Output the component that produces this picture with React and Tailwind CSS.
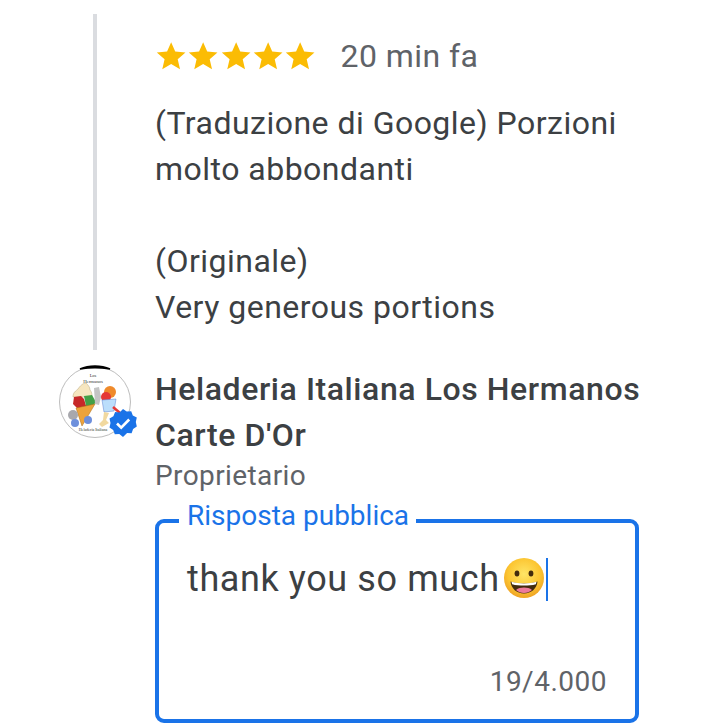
import React from "react";

const Star = () => (
  <svg viewBox="0 0 24 24" className="h-[32px] w-[32.3px] shrink-0">
    <path fill="#fbbc04" d="M12 1.600l3.050 7.100 7.700.68-5.830 5.070 1.740 7.550L12 18.000l-6.660 4 1.740-7.550L1.250 9.380l7.700-.68z" />
  </svg>
);

const Emoji = () => (
  <svg viewBox="0 0 44 44" className="ml-[2px] h-[44px] w-[44px] shrink-0 -translate-y-px">
    <defs>
      <radialGradient id="face" cx="50%" cy="40%" r="58%">
        <stop offset="0%" stopColor="#fee566" />
        <stop offset="70%" stopColor="#fcc531" />
        <stop offset="100%" stopColor="#f0a626" />
      </radialGradient>
    </defs>
    <circle cx="22" cy="22" r="20" fill="url(#face)" />
    <ellipse cx="15" cy="17.500" rx="2.400" ry="3" fill="#422b0d" />
    <ellipse cx="29" cy="17.500" rx="2.400" ry="3" fill="#422b0d" />
    <path d="M8.500 25.500c4.200 1.500 8.500 2 13.500 2s9.300-.5 13.500-2c-.5 7-6.300 12-13.500 12s-13-5-13.500-12z" fill="#422b0d" />
    <path d="M9.500 25.800c4 1.100 8 1.600 12.500 1.600s8.500-.5 12.500-1.600l-.6 2.400c-3.700 1-7.600 1.400-11.900 1.400s-8.200-.4-11.900-1.400z" fill="#fff" />
    <path d="M14 34c2-1.800 5-2.500 8-2.500s6 .7 8 2.500c-2.200 2-5 3-8 3s-5.800-1-8-3z" fill="#ed7a9a" />
  </svg>
);

const Avatar = () => (
  <div className="relative h-[72px] w-[72px] shrink-0">
    <svg viewBox="0 0 72 72" className="h-[72px] w-[72px] overflow-visible">
      <circle cx="36" cy="36" r="35.500" fill="#fff" stroke="#bdbdbd" strokeWidth="1" />
      <path d="M21 3c9-4 21-4 30 0c-9-1.500-21-1.500-30 0z" fill="#000" stroke="#000" strokeWidth="1.500" />
      <text x="34" y="11" fontSize="4.500" textAnchor="middle" fill="#333" fontFamily="Liberation Serif, serif">Los</text>
      <text x="34" y="17" fontSize="4.800" textAnchor="middle" fill="#333" fontFamily="Liberation Serif, serif">Hermanos</text>
      <path d="M14 31c0-5 3-6 5-8 2-3 5-6 8-6 2 2 4 4 4 7 2 2 2 5 2 7z" fill="#f6e6bf" stroke="#b9a77a" strokeWidth="0.500" />
      <path d="M15 31l7-1 3 3 3 10-8 1-6-6z" fill="#c62828" />
      <path d="M25 30l8-1 4 7-6 7-4-3z" fill="#43a047" />
      <path d="M17 42l19-4-13 22z" fill="#eda33c" stroke="#a86a18" strokeWidth="0.500" />
      <circle cx="14" cy="49" r="5" fill="#a8a8ad" />
      <circle cx="16" cy="57" r="4" fill="#6d8fdc" />
      <circle cx="29" cy="54" r="4" fill="#6d8fdc" />
      <path d="M35 22l5-1 2 10-2 8-4-1z" fill="#c4c4c4" />
      <circle cx="51" cy="26" r="6" fill="#ef8a2b" />
      <circle cx="47" cy="31" r="5" fill="#e53935" />
      <path d="M43 34l14-1-2 12-10 1z" fill="#bbdefb" stroke="#5b7fd1" strokeWidth="0.500" />
      <path d="M45 46l5 1-3 7 3 3-7 4-3-3 4-4z" fill="#f1d9a0" />
      <path d="M54 41l7 6" stroke="#e53935" strokeWidth="2.500" />
      <text x="34" y="65" fontSize="4" textAnchor="middle" fill="#333" fontFamily="Liberation Serif, serif">Heladeria Italiana</text>
    </svg>
    <svg viewBox="0 0 30 30" className="absolute left-[49px] top-[42px] h-[30px] w-[30px]">
      <path fill="#1a73e8" d="M15 1l3.700 2.600 4.500-.4 1.600 4.200 4 2.100-1 4.500 1 4.500-3.700 2.400-1.500 4.300-4.500-.1L15 29l-3.700-2.900-4.500.2-1.600-4.300-3.700-2.500 1-4.500-1-4.500 3.900-2.200 1.700-4.200 4.500.5z" />
      <path fill="none" stroke="#fff" strokeWidth="2.600" d="M9 15.500l4.200 4.200 8-8.200" />
    </svg>
  </div>
);

export default function App() {
  return (
    <div className="h-[727px] w-[719px] overflow-hidden bg-white pt-[14px] font-['Roboto',sans-serif] text-[#3c4043]">
      <div className="ml-[93px] flex h-[336px] border-l-4 border-[#dadce0] pl-[58px]">
        <div>
          <div className="flex items-center pt-[25px]">
            <div className="flex">
              <Star />
              <Star />
              <Star />
              <Star />
              <Star />
            </div>
            <span className="ml-[24px] text-[32px] leading-[34px] tracking-[0.45px] text-[#5f6368]">20 min fa</span>
          </div>
          <p className="mt-[27px] whitespace-nowrap text-[32px] leading-[46px] tracking-[0.48px]">
            (Traduzione di Google) Porzioni
            <br />
            molto abbondanti
            <br />
            <br />
            (Originale)
            <br />
            Very generous portions
          </p>
        </div>
      </div>
      <div className="ml-[59px] mt-[16px] flex">
        <Avatar />
        <div className="ml-[24px]">
          <div className="whitespace-nowrap text-[32px] font-medium leading-[46px] tracking-[0.58px]">
            Heladeria Italiana Los Hermanos
            <br />
            Carte D'Or
          </div>
          <div className="mt-px text-[28px] leading-[34px] tracking-[0.4px] text-[#5f6368]">Proprietario</div>
          <div className="relative mt-[26px] h-[204px] w-[484px] rounded-[9px] border-4 border-[#1a73e8]">
            <span className="absolute -top-[24px] left-[20px] whitespace-nowrap bg-white pl-[8px] pr-[7px] text-[28px] leading-[34px] text-[#1a73e8]">
              Risposta pubblica
            </span>
            <div className="flex items-center whitespace-nowrap pl-[28px] pt-[33px] text-[36px] leading-[46px] tracking-[0.6px]">
              thank you so much
              <Emoji />
              <span className="h-[43px] w-[2px] bg-[#1a73e8]" />
            </div>
            <div className="absolute bottom-[20px] right-[28px] text-[28px] leading-[34px] tracking-[0.5px] text-[#5f6368]">19/4.000</div>
          </div>
        </div>
      </div>
    </div>
  );
}
